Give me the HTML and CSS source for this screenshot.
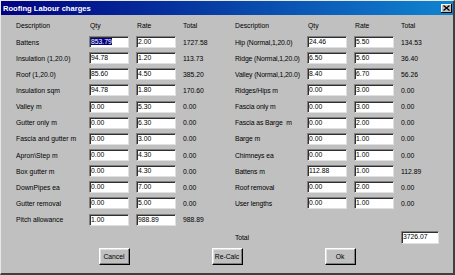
FILE: index.html
```html
<!DOCTYPE html>
<html lang="en">
<head>
    <meta charset="UTF-8">
    <meta name="viewport" content="width=device-width, initial-scale=1.0">
    <title>Roofing Labour charges</title>
    <link rel="stylesheet" href="styles.css">
</head>
<body>
    <div class="window">
        <div class="titlebar">
            <span class="title">Roofing Labour charges</span>
            <span class="close">
                <svg width="7" height="6" viewBox="0 0 7 6"><path d="M0.5 0.5L6.5 5.5M6.5 0.5L0.5 5.5" stroke="#000" stroke-width="1.3"/></svg>
            </span>
        </div>
        <div class="panels">
            <div class="panel left">
                <div class="head">Description</div><div class="head num">Qty</div><div class="head num">Rate</div><div class="head">Total</div>

                <div class="label">Battens</div><div class="field"><span class="sel">853.79</span></div><div class="field">2.00</div><div class="total">1727.58</div>
                <div class="label">Insulation (1,20.0)</div><div class="field">94.78</div><div class="field">1.20</div><div class="total">113.73</div>
                <div class="label">Roof (1,20.0)</div><div class="field">85.60</div><div class="field">4.50</div><div class="total">385.20</div>
                <div class="label">Insulation sqm</div><div class="field">94.78</div><div class="field">1.80</div><div class="total">170.60</div>
                <div class="label">Valley m</div><div class="field">0.00</div><div class="field">5.30</div><div class="total">0.00</div>
                <div class="label">Gutter only m</div><div class="field">0.00</div><div class="field">6.30</div><div class="total">0.00</div>
                <div class="label">Fascia and gutter m</div><div class="field">0.00</div><div class="field">3.00</div><div class="total">0.00</div>
                <div class="label">Apron\Step m</div><div class="field">0.00</div><div class="field">4.30</div><div class="total">0.00</div>
                <div class="label">Box gutter m</div><div class="field">0.00</div><div class="field">4.30</div><div class="total">0.00</div>
                <div class="label">DownPipes ea</div><div class="field">0.00</div><div class="field">7.00</div><div class="total">0.00</div>
                <div class="label">Gutter removal</div><div class="field">0.00</div><div class="field">5.00</div><div class="total">0.00</div>
                <div class="label">Pitch allowance</div><div class="field">1.00</div><div class="field">988.89</div><div class="total">988.89</div>
            </div>
            <div class="panel right">
                <div class="head">Description</div><div class="head num">Qty</div><div class="head num">Rate</div><div class="head">Total</div>

                <div class="label">Hip (Normal,1,20.0)</div><div class="field">24.46</div><div class="field">5.50</div><div class="total">134.53</div>
                <div class="label">Ridge (Normal,1,20.0)</div><div class="field">6.50</div><div class="field">5.60</div><div class="total">36.40</div>
                <div class="label">Valley (Normal,1,20.0)</div><div class="field">8.40</div><div class="field">6.70</div><div class="total">56.26</div>
                <div class="label">Ridges/Hips m</div><div class="field">0.00</div><div class="field">3.00</div><div class="total">0.00</div>
                <div class="label">Fascia only m</div><div class="field">0.00</div><div class="field">3.00</div><div class="total">0.00</div>
                <div class="label">Fascia as Barge&nbsp; m</div><div class="field">0.00</div><div class="field">2.00</div><div class="total">0.00</div>
                <div class="label">Barge m</div><div class="field">0.00</div><div class="field">1.00</div><div class="total">0.00</div>
                <div class="label">Chimneys ea</div><div class="field">0.00</div><div class="field">1.00</div><div class="total">0.00</div>
                <div class="label">Battens m</div><div class="field">112.88</div><div class="field">1.00</div><div class="total">112.89</div>
                <div class="label">Roof removal</div><div class="field">0.00</div><div class="field">2.00</div><div class="total">0.00</div>
                <div class="label">User lengths</div><div class="field">0.00</div><div class="field">1.00</div><div class="total">0.00</div>

                <div class="spacer"></div>
                <div class="label">Total</div><div></div><div></div><div class="field grand">3726.07</div>
            </div>
        </div>
        <div class="buttons">
            <button class="btn">Cancel</button>
            <button class="btn">Re-Calc</button>
            <button class="btn">Ok</button>
        </div>
    </div>
</body>
</html>
```

FILE: styles.css
```css
* {
    box-sizing: border-box;
}
body {
    margin: 0;
    background: #c0c0c0;
    font-family: "Liberation Sans", Arial, sans-serif;
    font-size: 6.8px;
    color: #000;
}
.window {
    width: 455px;
    height: 275px;
    background: #c0c0c0;
    border-top: 1px solid #e8e8e8;
    border-left: 1px solid #e8e8e8;
    border-right: 2px solid #404040;
    border-bottom: 2px solid #404040;
}
.titlebar {
    height: 14px;
    display: flex;
    align-items: center;
    justify-content: space-between;
    background: linear-gradient(to right, #000080, #1084d0);
}
.title {
    color: #fff;
    font-weight: bold;
    font-size: 7.6px;
    padding-left: 2px;
}
.close {
    width: 11px;
    height: 9px;
    margin-right: 1px;
    display: flex;
    align-items: center;
    justify-content: center;
    background: #c0c0c0;
    box-shadow: inset -1px -1px #000, inset 1px 1px #fff;
}
.panels {
    display: flex;
    padding: 2px 0 0 15px;
}
.panel {
    display: grid;
    grid-template-rows: 17px;
    grid-auto-rows: 16.15px;
    column-gap: 7px;
    align-items: center;
    white-space: nowrap;
}
.left {
    width: 219px;
    grid-template-columns: 66px 40px 40px auto;
}
.right {
    grid-template-columns: 65px 40px 40px auto;
    grid-template-rows: 17px repeat(11, 16.15px) 18px;
}
.right .label {
    letter-spacing: -0.1px;
}
.head.num {
    padding-left: 1px;
}
.field {
    height: 12px;
    line-height: 9px;
    padding-left: 1px;
    background: #fff;
    border: 1px solid;
    border-color: #808080 #e0e0e0 #e0e0e0 #808080;
    box-shadow: inset 1px 1px #303030;
}
.sel {
    background: #000080;
    color: #fff;
}
.grand {
    width: 38px;
    height: 13px;
}
.spacer {
    grid-column: 1 / -1;
}
.buttons {
    display: flex;
    justify-content: center;
    gap: 82px;
    margin-top: 2px;
}
.btn {
    width: 31px;
    height: 17px;
    padding: 0;
    font: inherit;
    color: #000;
    background: #c0c0c0;
    border: 1px solid;
    border-color: #fff #000 #000 #fff;
    box-shadow: inset -1px -1px #808080, inset 1px 1px #dfdfdf;
}
```
